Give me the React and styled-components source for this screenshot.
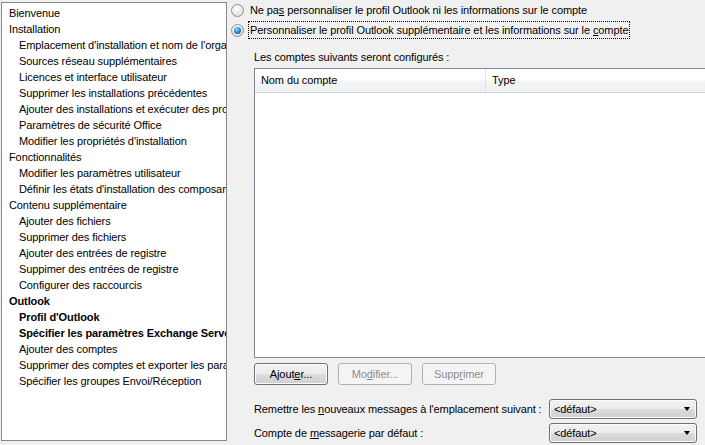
import React from "react";
import styled, { createGlobalStyle } from "styled-components";

const GlobalStyle = createGlobalStyle`
  html, body {
    margin: 0;
    padding: 0;
    background: #f0f0f0;
  }
  body {
    font-family: "Liberation Sans", Arial, sans-serif;
    font-size: 11px;
    letter-spacing: -0.1px;
    color: #000;
  }
`;

const Page = styled.div`
  width: 705px;
  height: 445px;
  overflow: hidden;
  display: flex;
  align-items: flex-start;
  background: #f0f0f0;
`;

const TreePanel = styled.div`
  margin: 2px 0 0 1px;
  width: 226px;
  height: 439px;
  background: #fff;
  border: 1px solid #828790;
  padding-top: 2px;
  overflow: hidden;
  box-sizing: border-box;
`;

const TreeItem = styled.div`
  height: 16px;
  line-height: 16px;
  padding-left: ${(p) => (p.$level === 0 ? 7 : 17)}px;
  font-weight: ${(p) => (p.$bold ? "bold" : "normal")};
  white-space: nowrap;
`;

const Content = styled.div`
  flex: 1;
  padding: 0 0 0 4px;
  display: flex;
  flex-direction: column;
  min-width: 0;
`;

const RadioRow = styled.label`
  display: flex;
  align-items: center;
  height: 20px;
  gap: 4px;
`;

const RadioCircle = styled.span`
  width: 13px;
  height: 13px;
  border-radius: 50%;
  box-sizing: border-box;
  border: 1px solid #8e8f8f;
  background: radial-gradient(circle at 40% 35%, #ffffff 0%, #e6e6e6 60%, #cfcfcf 100%);
  display: flex;
  align-items: center;
  justify-content: center;
  flex-shrink: 0;

  &::after {
    content: "";
    display: ${(p) => (p.$checked ? "block" : "none")};
    width: 7px;
    height: 7px;
    border-radius: 50%;
    background: radial-gradient(circle at 40% 35%, #9fdcff 0%, #2b8be0 45%, #0a3f8c 100%);
  }
`;

const RadioText = styled.span`
  padding: 1px 1px;
  border: 1px dotted ${(p) => (p.$focus ? "#000" : "transparent")};
  line-height: 14px;
  white-space: nowrap;
`;

const Group = styled.div`
  padding-left: 23px;
  display: flex;
  flex-direction: column;
`;

const Caption = styled.div`
  margin-top: 10px;
  height: 15px;
  line-height: 15px;
`;

const ListView = styled.div`
  margin-top: 3px;
  width: 470px;
  height: 290px;
  background: #fff;
  border: 1px solid #828790;
  box-sizing: border-box;
  display: flex;
  flex-direction: column;
`;

const HeaderRow = styled.div`
  display: flex;
  height: 23px;
  background: linear-gradient(#ffffff 0%, #ffffff 45%, #f3f4f6 55%, #f0f1f3 100%);
  border-bottom: 1px solid #d5d5d5;
`;

const HeaderCell = styled.div`
  width: ${(p) => p.$width}px;
  padding-left: 6px;
  line-height: 22px;
  border-right: ${(p) => (p.$divider ? "1px solid #e0e2e6" : "none")};
  box-sizing: border-box;
`;

const ButtonRow = styled.div`
  display: flex;
  gap: 10px;
  margin-top: 5px;
`;

const Button = styled.button`
  width: 74px;
  height: 22px;
  font-family: inherit;
  font-size: 11px;
  letter-spacing: inherit;
  padding: 0;
  border-radius: 3px;
  border: 1px solid ${(p) => (p.disabled ? "#adb2b5" : "#707070")};
  color: ${(p) => (p.disabled ? "#8d8d8d" : "#000")};
  background: ${(p) =>
    p.disabled
      ? "#f4f4f4"
      : "linear-gradient(#f2f2f2 0%, #ebebeb 49%, #dddddd 50%, #cfcfcf 100%)"};
  box-shadow: ${(p) => (p.disabled ? "none" : "inset 0 0 0 1px #fcfcfc")};
`;

const FieldRow = styled.div`
  display: flex;
  align-items: center;
  justify-content: space-between;
  width: 443px;
  height: 20px;
  margin-top: ${(p) => p.$gap}px;
`;

const Select = styled.div`
  width: 148px;
  height: 20px;
  box-sizing: border-box;
  border: 1px solid #707070;
  border-radius: 3px;
  background: linear-gradient(#f2f2f2 0%, #ebebeb 49%, #dddddd 50%, #cfcfcf 100%);
  box-shadow: inset 0 0 0 1px #fcfcfc;
  display: flex;
  align-items: center;
  justify-content: space-between;
  padding: 0 6px 0 4px;
`;

const Arrow = styled.span`
  width: 0;
  height: 0;
  border-left: 3.5px solid transparent;
  border-right: 3.5px solid transparent;
  border-top: 4px solid #000;
`;

const tree = [
  { t: "Bienvenue", l: 0 },
  { t: "Installation", l: 0 },
  { t: "Emplacement d'installation et nom de l'organisation", l: 1 },
  { t: "Sources réseau supplémentaires", l: 1 },
  { t: "Licences et interface utilisateur", l: 1 },
  { t: "Supprimer les installations précédentes", l: 1 },
  { t: "Ajouter des installations et exécuter des programmes", l: 1 },
  { t: "Paramètres de sécurité Office", l: 1 },
  { t: "Modifier les propriétés d'installation", l: 1 },
  { t: "Fonctionnalités", l: 0 },
  { t: "Modifier les paramètres utilisateur", l: 1 },
  { t: "Définir les états d'installation des composants", l: 1 },
  { t: "Contenu supplémentaire", l: 0 },
  { t: "Ajouter des fichiers", l: 1 },
  { t: "Supprimer des fichiers", l: 1 },
  { t: "Ajouter des entrées de registre", l: 1 },
  { t: "Suppimer des entrées de registre", l: 1 },
  { t: "Configurer des raccourcis", l: 1 },
  { t: "Outlook", l: 0, b: true },
  { t: "Profil d'Outlook", l: 1, b: true },
  { t: "Spécifier les paramètres Exchange Server", l: 1, b: true },
  { t: "Ajouter des comptes", l: 1 },
  { t: "Supprimer des comptes et exporter les paramètres", l: 1 },
  { t: "Spécifier les groupes Envoi/Réception", l: 1 },
];

export default function App() {
  return (
    <Page>
      <GlobalStyle />
      <TreePanel>
        {tree.map((item) => (
          <TreeItem key={item.t} $level={item.l} $bold={item.b}>
            {item.t}
          </TreeItem>
        ))}
      </TreePanel>
      <Content>
        <RadioRow>
          <RadioCircle />
          <RadioText>
            Ne pa<u>s</u> personnaliser le profil Outlook ni les informations sur le compte
          </RadioText>
        </RadioRow>
        <RadioRow>
          <RadioCircle $checked />
          <RadioText $focus>
            Personnaliser le profil Outlook supplémentaire et les informations sur le <u>c</u>ompte
          </RadioText>
        </RadioRow>
        <Group>
          <Caption>Les comptes suivants seront configurés :</Caption>
          <ListView>
            <HeaderRow>
              <HeaderCell $width={231} $divider>Nom du compte</HeaderCell>
              <HeaderCell $width={237}>Type</HeaderCell>
            </HeaderRow>
          </ListView>
          <ButtonRow>
            <Button>
              Ajout<u>e</u>r...
            </Button>
            <Button disabled>
              Mo<u>d</u>ifier...
            </Button>
            <Button disabled>
              Supp<u>r</u>imer
            </Button>
          </ButtonRow>
          <FieldRow $gap={14}>
            <span>
              Remettre les <u>n</u>ouveaux messages à l'emplacement suivant :
            </span>
            <Select>
              <span>&lt;défaut&gt;</span>
              <Arrow />
            </Select>
          </FieldRow>
          <FieldRow $gap={4}>
            <span>
              Compte de <u>m</u>essagerie par défaut :
            </span>
            <Select>
              <span>&lt;défaut&gt;</span>
              <Arrow />
            </Select>
          </FieldRow>
        </Group>
      </Content>
    </Page>
  );
}
